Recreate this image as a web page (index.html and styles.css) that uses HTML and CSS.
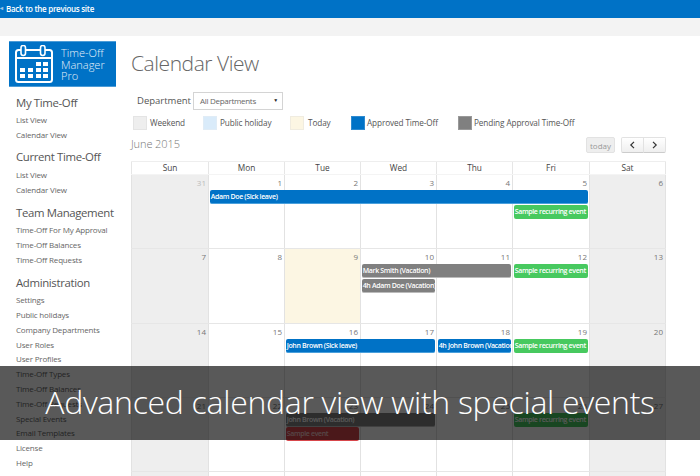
FILE: index.html
```html
<!DOCTYPE html>
<html lang="en">
<head>
<meta charset="utf-8">
<title>Calendar View</title>
<link rel="stylesheet" href="styles.css">
</head>
<body>
<div class="topbar"><span class="back-arrow">◂</span><span>Back to the previous site</span></div>
<div class="ribbon"></div>
<div class="layout">
  <aside class="sidebar">
    <div class="logo">
      <svg class="logo-icon" width="38" height="38" viewBox="0 0 38 38">
        <rect x="1" y="5" width="36" height="32" rx="2.5" fill="none" stroke="#fff" stroke-width="2"/>
        <rect x="1" y="12" width="36" height="2" fill="#fff"/>
        <rect x="6" y="0.5" width="4.5" height="10" rx="2.2" fill="#0072c6" stroke="#fff" stroke-width="1.6"/>
        <rect x="25.5" y="0.5" width="4.5" height="10" rx="2.2" fill="#0072c6" stroke="#fff" stroke-width="1.6"/>
        <g fill="#fff">
          <rect x="21" y="17" width="5" height="4"/><rect x="28" y="17" width="5" height="4"/>
          <rect x="5" y="23" width="5" height="4"/><rect x="13" y="23" width="5" height="4"/><rect x="21" y="23" width="5" height="4"/><rect x="28" y="23" width="5" height="4"/>
          <rect x="5" y="29" width="5" height="4"/><rect x="13" y="29" width="5" height="4"/><rect x="21" y="29" width="5" height="4"/><rect x="28" y="29" width="5" height="4"/>
        </g>
      </svg>
      <div class="logo-text">Time-Off<br>Manager<br>Pro</div>
    </div>
    <nav class="nav">
      <h3>My Time-Off</h3>
      <a>List View</a><a>Calendar View</a>
      <h3>Current Time-Off</h3>
      <a>List View</a><a>Calendar View</a>
      <h3>Team Management</h3>
      <a>Time-Off For My Approval</a><a>Time-Off Balances</a><a>Time-Off Requests</a>
      <h3>Administration</h3>
      <a>Settings</a><a>Public holidays</a><a>Company Departments</a><a>User Roles</a><a>User Profiles</a><a>Time-Off Types</a><a>Time-Off Balances</a><a>Time-Off Requests</a><a>Special Events</a><a>Email Templates</a><a>License</a><a>Help</a>
    </nav>
  </aside>
  <main class="main">
    <h1 class="title">Calendar View</h1>
    <div class="filter">
      <label class="filter-label">Department</label>
      <div class="select"><span>All Departments</span><span class="caret">▼</span></div>
    </div>
    <div class="legend">
      <div class="legend-item w-weekend"><i class="swatch s-weekend"></i>Weekend</div>
      <div class="legend-item w-holiday"><i class="swatch s-holiday"></i>Public holiday</div>
      <div class="legend-item w-today"><i class="swatch s-today"></i>Today</div>
      <div class="legend-item w-approved"><i class="swatch s-approved"></i>Approved Time-Off</div>
      <div class="legend-item"><i class="swatch s-pending"></i>Pending Approval Time-Off</div>
    </div>
    <div class="toolbar">
      <div class="month">June 2015</div>
      <div class="buttons">
        <div class="btn btn-today">today</div>
        <div class="btn-group">
          <div class="btn btn-nav"><svg width="7" height="8" viewBox="0 0 7 8"><path d="M5 .8 1.8 4 5 7.2" fill="none" stroke="#333" stroke-width="1.2"/></svg></div>
          <div class="btn btn-nav"><svg width="7" height="8" viewBox="0 0 7 8"><path d="M2 .8 5.2 4 2 7.2" fill="none" stroke="#333" stroke-width="1.2"/></svg></div>
        </div>
      </div>
    </div>
    <div class="calendar">
      <div class="head"><div>Sun</div><div>Mon</div><div>Tue</div><div>Wed</div><div>Thu</div><div>Fri</div><div>Sat</div></div>

      <div class="week">
        <div class="day c1 weekend other">31</div><div class="day c2">1</div><div class="day c3">2</div><div class="day c4">3</div><div class="day c5">4</div><div class="day c6">5</div><div class="day c7 weekend">6</div>
        <div class="ev blue c2 r2 span5">Adam Doe (Sick leave)</div>
        <div class="ev green c6 r3">Sample recurring event</div>
      </div>

      <div class="week">
        <div class="day c1 weekend">7</div><div class="day c2">8</div><div class="day c3 today">9</div><div class="day c4">10</div><div class="day c5">11</div><div class="day c6">12</div><div class="day c7 weekend">13</div>
        <div class="ev gray c4 r2 span2">Mark Smith (Vacation)</div>
        <div class="ev green c6 r2">Sample recurring event</div>
        <div class="ev gray c4 r3">4h Adam Doe (Vacation)</div>
      </div>

      <div class="week">
        <div class="day c1 weekend">14</div><div class="day c2">15</div><div class="day c3">16</div><div class="day c4">17</div><div class="day c5">18</div><div class="day c6">19</div><div class="day c7 weekend">20</div>
        <div class="ev blue c3 r2 span2">John Brown (Sick leave)</div>
        <div class="ev blue c5 r2">4h John Brown (Vacation)</div>
        <div class="ev green c6 r2">Sample recurring event</div>
      </div>

      <div class="week">
        <div class="day c1 weekend">21</div><div class="day c2">22</div><div class="day c3">23</div><div class="day c4">24</div><div class="day c5">25</div><div class="day c6">26</div><div class="day c7 weekend">27</div>
        <div class="ev gray c3 r2 span2">John Brown (Vacation)</div>
        <div class="ev green c6 r2">Sample recurring event</div>
        <div class="ev red c3 r3">Sample event</div>
      </div>

      <div class="week">
        <div class="day c1 weekend">28</div><div class="day c2">29</div><div class="day c3">30</div><div class="day c4 other">1</div><div class="day c5 other">2</div><div class="day c6 other">3</div><div class="day c7 weekend other">4</div>
      </div>
    </div>
  </main>
</div>
<div class="caption">Advanced calendar view with special events</div>
</body>
</html>
```
FILE: styles.css
```css
* { box-sizing: border-box; }
html, body { margin: 0; height: 476px; overflow: hidden; }
body { position: relative; background: #fff; font-family: "Open Sans", "Liberation Sans", sans-serif; color: #666; }

.topbar { height: 18px; background: #0072c6; color: #fff; font-size: 8px; font-weight: 600; letter-spacing: -.28px; line-height: 17px; display: flex; white-space: nowrap; }
.back-arrow { width: 6px; font-size: 6px; color: #9cc7e6; }
.ribbon { height: 18px; background: #f3f3f3; }

.layout { display: flex; }
.sidebar { width: 131px; flex: none; padding: 5px 0 0 9px; }
.logo { width: 107px; height: 46px; background: #0072c6; display: flex; padding: 3px 0 0 6px; border: 1px solid #4c9cd7; border-width: 1px 0; }
.logo-icon { flex: none; margin-right: 8px; }
.logo-text { color: #e3f0f9; font-size: 11px; line-height: 11.5px; font-weight: 300; padding-top: 2px; }

.nav { padding: 0 0 0 7px; }
.nav h3 { margin: 0; padding-top: 6px; height: 25.6px; font-size: 11.4px; letter-spacing: -.35px; line-height: 18px; font-weight: 400; color: #555; white-space: nowrap; }
.nav h3:first-child { height: 25.2px; margin-top: .6px; }
.nav a { display: block; height: 14.8px; font-size: 8px; letter-spacing: -.17px; line-height: 14.8px; color: #666; white-space: nowrap; }

.main { flex: 1; min-width: 0; padding-right: 34px; }
.title { margin: 0; height: 56px; padding-top: 11px; font-size: 21px; letter-spacing: -.45px; line-height: 32px; font-weight: 300; color: #666; white-space: nowrap; }
.filter { display: flex; align-items: center; height: 18px; margin-left: 6px; }
.filter-label { font-size: 9.5px; line-height: 15px; padding-bottom: 2px; color: #555; width: 56px; }
.select { width: 90px; height: 18px; border: 1px solid #d4d4d4; display: flex; justify-content: space-between; align-items: center; padding: 0 4px 2px 6px; font-size: 8px; letter-spacing: -.3px; color: #666; }
.caret { font-size: 5px; color: #222; }

.legend { display: flex; margin: 6px 0 0 2px; height: 14px; font-size: 8.2px; letter-spacing: -.1px; line-height: 14px; color: #555; white-space: nowrap; }
.legend-item { display: flex; align-items: center; }
.w-weekend { width: 70px; }
.w-holiday { width: 87px; }
.w-today { width: 61px; }
.w-approved { width: 107px; }
.swatch { width: 14px; height: 14px; margin-right: 3px; border: 1px solid #e4e4e4; }
.s-weekend { background: #eee; }
.s-holiday { background: #d9ebfa; border-color: #e0ecf6; margin-right: 3px; }
.s-today { background: #fcf6e3; border-color: #f0ece0; margin-right: 4px; }
.s-approved { background: #0072c6; border-color: #2e8ad0; margin-right: 2px; }
.s-pending { background: #808080; border-color: #999; margin-right: 2px; }

.toolbar { display: flex; justify-content: space-between; align-items: flex-start; height: 24px; margin-top: 7px; }
.month { font-size: 11px; letter-spacing: -.1px; line-height: 14px; font-weight: 300; color: #777; }
.buttons { display: flex; gap: 6px; }
.btn { height: 16px; border: 1px solid #e2e2e2; display: flex; align-items: center; justify-content: center; }
.btn-today { width: 29px; background: #eee; border-radius: 2px; font-size: 8px; color: #999; }
.btn-group { display: flex; }
.btn-nav { width: 23px; background: linear-gradient(#fff, #efefef); border-bottom-color: #ccc; }
.btn-nav:first-child { border-radius: 2px 0 0 2px; }
.btn-nav:last-child { border-radius: 0 2px 2px 0; margin-left: -1px; }

.calendar { display: flex; flex-direction: column; }
.head, .week { display: grid; grid-template-columns: 77px 76px 76px 76px 76px 77px 77px; }
.head { height: 14px; border-top: 1px solid #eee; font-size: 8.3px; line-height: 11px; text-align: center; color: #444; background: #f4f4f4; padding-bottom: 1px; }
.head > div { background: #fff; border-left: 1px solid #e6e6e6; }
.head > div:last-child { border-right: 1px solid #e6e6e6; }
.week { grid-template-rows: 15px 14.5px 14.5px 1fr; height: 74.3px; border-bottom: 1px solid #e6e6e6; }
.day { grid-row: 1 / -1; border-left: 1px solid #e2e2e2; text-align: right; font-size: 8px; line-height: 15px; padding-right: 2px; color: #777; }
.c7.day { border-right: 1px solid #e2e2e2; }
.weekend { background: #eee; }
.today { background: #fcf6e3; }
.other { color: #bbb; }

.c1 { grid-column: 1; }
.c2 { grid-column: 2; }
.c3 { grid-column: 3; }
.c4 { grid-column: 4; }
.c5 { grid-column: 5; }
.c6 { grid-column: 6; }
.c7 { grid-column: 7; }
.r2 { grid-row: 2; }
.r3 { grid-row: 3; }
.span2 { grid-column-end: span 2; }
.span5 { grid-column-end: span 5; }

.ev { height: 14px; margin: 0 1.3px 0 1.7px; padding-left: 1px; border-radius: 2px; font-size: 7px; letter-spacing: -.35px; font-weight: 600; line-height: 13.5px; color: #fff; white-space: nowrap; overflow: hidden; }
.blue { background: #0072c6; border-bottom: 1px solid #4aa0dc; }
.green { background: #47c95f; }
.gray { background: #808080; border-bottom: 1px solid #bbb; }
.red { background: #d8474c; color: #f4c9ca; }

.caption { position: absolute; left: 0; right: 0; top: 366px; height: 74px; background: rgba(0, 0, 0, .65); color: #fff; font-size: 32px; letter-spacing: -.29px; font-weight: 300; line-height: 72px; text-align: center; white-space: nowrap; }
```
